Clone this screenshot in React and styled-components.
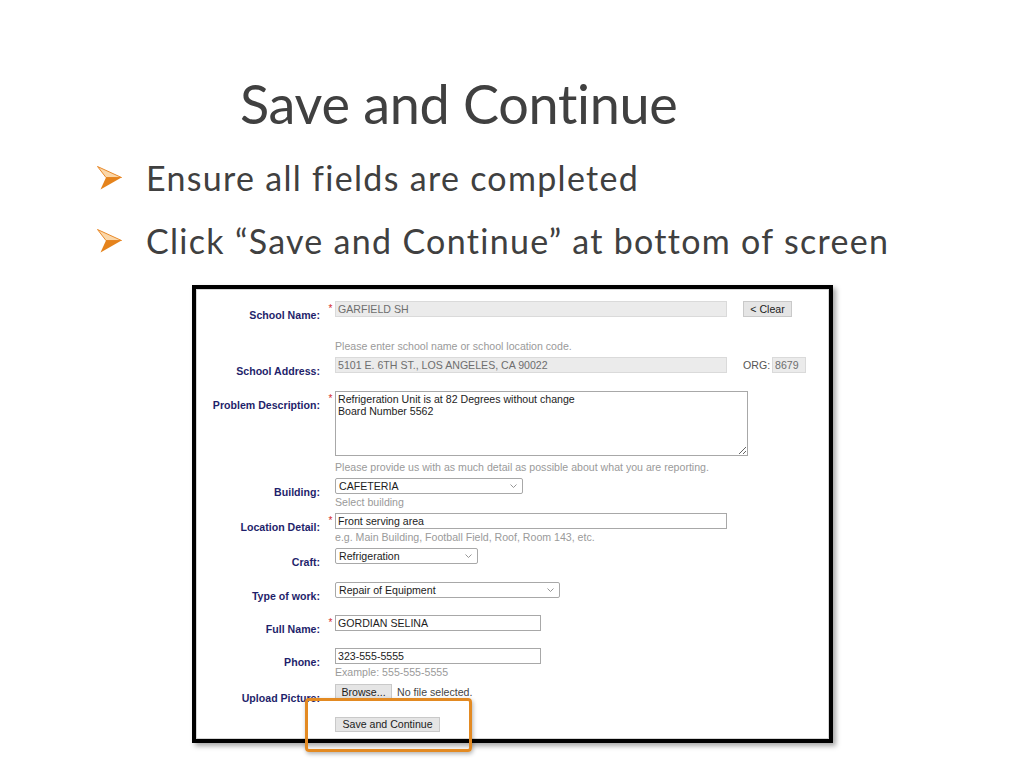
import styled, { createGlobalStyle } from "styled-components";

const GlobalStyle = createGlobalStyle`
  html, body {
    margin: 0;
    padding: 0;
    background: #ffffff;
  }
  body {
    font-family: Lato, "Open Sans", sans-serif;
  }
`;

const Slide = styled.div`
  width: 1024px;
  height: 768px;
  overflow: hidden;
  padding-top: 77px;
  box-sizing: border-box;
  color: #404040;
`;

const Title = styled.h1`
  margin: 0 0 0 240px;
  font-family: Lato, sans-serif;
  font-weight: 400;
  font-size: 54px;
  line-height: 1;
  letter-spacing: -0.3px;
`;

const Bullets = styled.ul`
  list-style: none;
  margin: 27px 0 0 97px;
  padding: 0;
  display: flex;
  flex-direction: column;
  gap: 22px;
`;

const Bullet = styled.li`
  display: flex;
  align-items: center;
  gap: 24px;
  font-size: 34px;
  line-height: 1.2;
  letter-spacing: 1.3px;
`;

const Arrow = () => (
  <svg width="25" height="24" viewBox="0 0 25 24">
    <polygon points="0.5,0.5 24.5,11.5 9,11.5" fill="#fbd7a8" stroke="#e8892a" strokeWidth="1" />
    <polygon points="9,11.5 24.5,11.5 3.5,23.5" fill="#e5831c" />
  </svg>
);

const FrameWrap = styled.div`
  position: relative;
  margin: 23px 0 0 192px;
  width: 641px;
`;

const Frame = styled.div`
  height: 458px;
  box-sizing: border-box;
  border: 4px solid #000;
  box-shadow: 3px 3px 5px rgba(0, 0, 0, 0.35);
  background: #fff;
`;

const Form = styled.div`
  height: 100%;
  box-sizing: border-box;
  border: 1px solid #d6d6d6;
  padding-top: 11px;
  font-family: "Liberation Sans", Arial, sans-serif;
  font-size: 10.6px;
  color: #222;
`;

const Row = styled.div`
  display: grid;
  grid-template-columns: 127px 11px 1fr;
  height: ${(p) => p.$h}px;
`;

const Label = styled.div`
  text-align: right;
  padding: 7px 4px 0 0;
  line-height: 14px;
  font-weight: 700;
  color: #1f1f6b;
  white-space: nowrap;
`;

const Star = styled.div`
  color: #d42a2a;
  font-size: 10px;
  line-height: 10px;
  padding: 3px 0 0 2px;
  text-align: center;
`;

const Field = styled.div`
  display: flex;
  flex-direction: column;
  align-items: flex-start;
`;

const Line = styled.div`
  display: flex;
  align-items: center;
  height: 16px;
`;

const TextBox = styled.input`
  box-sizing: border-box;
  width: ${(p) => p.$w}px;
  height: 16px;
  margin: 0;
  padding: 0 2px;
  border: 1px solid ${(p) => (p.$muted ? "#dadada" : "#a8a8a8")};
  background: ${(p) => (p.$muted ? "#ebebeb" : "#fff")};
  color: ${(p) => (p.$muted ? "#6e6e6e" : "#1c1c1c")};
  font: inherit;
  outline: none;
`;

const TextArea = styled.textarea`
  box-sizing: border-box;
  width: 413px;
  height: 65px;
  margin: 0;
  padding: 1px 2px;
  border: 1px solid #a8a8a8;
  font: inherit;
  line-height: 12.5px;
  color: #1c1c1c;
  outline: none;
  resize: both;
`;

const Select = styled.div`
  box-sizing: border-box;
  width: ${(p) => p.$w}px;
  height: 16px;
  border: 1px solid #a8a8a8;
  border-radius: 2px;
  padding: 0 5px 0 3px;
  display: flex;
  align-items: center;
  justify-content: space-between;
  color: #1c1c1c;
  line-height: 14px;
`;

const Chevron = () => (
  <svg width="7" height="4" viewBox="0 0 7 4">
    <polyline points="0.5,0.5 3.5,3.5 6.5,0.5" fill="none" stroke="#8a8a8a" strokeWidth="0.9" />
  </svg>
);

const Hint = styled.div`
  margin-top: ${(p) => p.$gap ?? 1}px;
  line-height: 14px;
  color: #9a9a9a;
  white-space: nowrap;
`;

const GreyButton = styled.div`
  box-sizing: border-box;
  width: ${(p) => p.$w}px;
  height: ${(p) => p.$hh ?? 16}px;
  margin-left: ${(p) => p.$ml ?? 0}px;
  border: 1px solid #c9c9c9;
  background: #e5e5e5;
  color: #1c1c1c;
  display: flex;
  align-items: center;
  justify-content: center;
`;

const Side = styled.span`
  margin: 0 2px 0 ${(p) => p.$ml}px;
  color: #555;
`;

const FileNote = styled.span`
  margin-left: 5px;
  color: #444;
`;

const Highlight = styled.div`
  position: absolute;
  left: 113px;
  top: 413px;
  width: 167px;
  height: 54px;
  box-sizing: border-box;
  border: 3px solid #e38a22;
  border-radius: 4px;
  box-shadow: 1px 2px 4px rgba(0, 0, 0, 0.3);
  pointer-events: none;
`;

export default function App() {
  return (
    <>
      <GlobalStyle />
      <Slide>
        <Title>Save and Continue</Title>
        <Bullets>
          <Bullet>
            <Arrow />
            <span>Ensure all fields are completed</span>
          </Bullet>
          <Bullet>
            <Arrow />
            <span>Click “Save and Continue” at bottom of screen</span>
          </Bullet>
        </Bullets>

        <FrameWrap>
          <Frame>
            <Form>
              <Row $h={56}>
                <Label>School Name:</Label>
                <Star>*</Star>
                <Field>
                  <Line>
                    <TextBox $w={392} $muted readOnly value="GARFIELD SH" />
                    <GreyButton $w={49} $ml={16}>&lt; Clear</GreyButton>
                  </Line>
                  <Hint $gap={22}>Please enter school name or school location code.</Hint>
                </Field>
              </Row>

              <Row $h={34}>
                <Label>School Address:</Label>
                <Star />
                <Field>
                  <Line>
                    <TextBox $w={392} $muted readOnly value="5101 E. 6TH ST., LOS ANGELES, CA 90022" />
                    <Side $ml={16}>ORG:</Side>
                    <TextBox $w={34} $muted readOnly value="8679" />
                  </Line>
                </Field>
              </Row>

              <Row $h={87}>
                <Label>Problem Description:</Label>
                <Star>*</Star>
                <Field>
                  <TextArea
                    readOnly
                    value={"Refrigeration Unit is at 82 Degrees without change\nBoard Number 5562"}
                  />
                  <Hint $gap={4}>
                    Please provide us with as much detail as possible about what you are reporting.
                  </Hint>
                </Field>
              </Row>

              <Row $h={35}>
                <Label>Building:</Label>
                <Star />
                <Field>
                  <Select $w={188}>
                    <span>CAFETERIA</span>
                    <Chevron />
                  </Select>
                  <Hint>Select building</Hint>
                </Field>
              </Row>

              <Row $h={35}>
                <Label>Location Detail:</Label>
                <Star>*</Star>
                <Field>
                  <TextBox $w={392} readOnly value="Front serving area" />
                  <Hint>e.g. Main Building, Football Field, Roof, Room 143, etc.</Hint>
                </Field>
              </Row>

              <Row $h={34}>
                <Label>Craft:</Label>
                <Star />
                <Field>
                  <Select $w={143}>
                    <span>Refrigeration</span>
                    <Chevron />
                  </Select>
                </Field>
              </Row>

              <Row $h={33}>
                <Label>Type of work:</Label>
                <Star />
                <Field>
                  <Select $w={225}>
                    <span>Repair of Equipment</span>
                    <Chevron />
                  </Select>
                </Field>
              </Row>

              <Row $h={33}>
                <Label>Full Name:</Label>
                <Star>*</Star>
                <Field>
                  <TextBox $w={206} readOnly value="GORDIAN SELINA" />
                </Field>
              </Row>

              <Row $h={36}>
                <Label>Phone:</Label>
                <Star />
                <Field>
                  <TextBox $w={206} readOnly value="323-555-5555" />
                  <Hint>Example: 555-555-5555</Hint>
                </Field>
              </Row>

              <Row $h={33}>
                <Label>Upload Picture:</Label>
                <Star />
                <Field>
                  <Line>
                    <GreyButton $w={57} $hh={15}>Browse...</GreyButton>
                    <FileNote>No file selected.</FileNote>
                  </Line>
                </Field>
              </Row>

              <Row $h={20}>
                <Label />
                <Star />
                <Field>
                  <GreyButton $w={105} $hh={15}>Save and Continue</GreyButton>
                </Field>
              </Row>
            </Form>
          </Frame>
          <Highlight />
        </FrameWrap>
      </Slide>
    </>
  );
}
